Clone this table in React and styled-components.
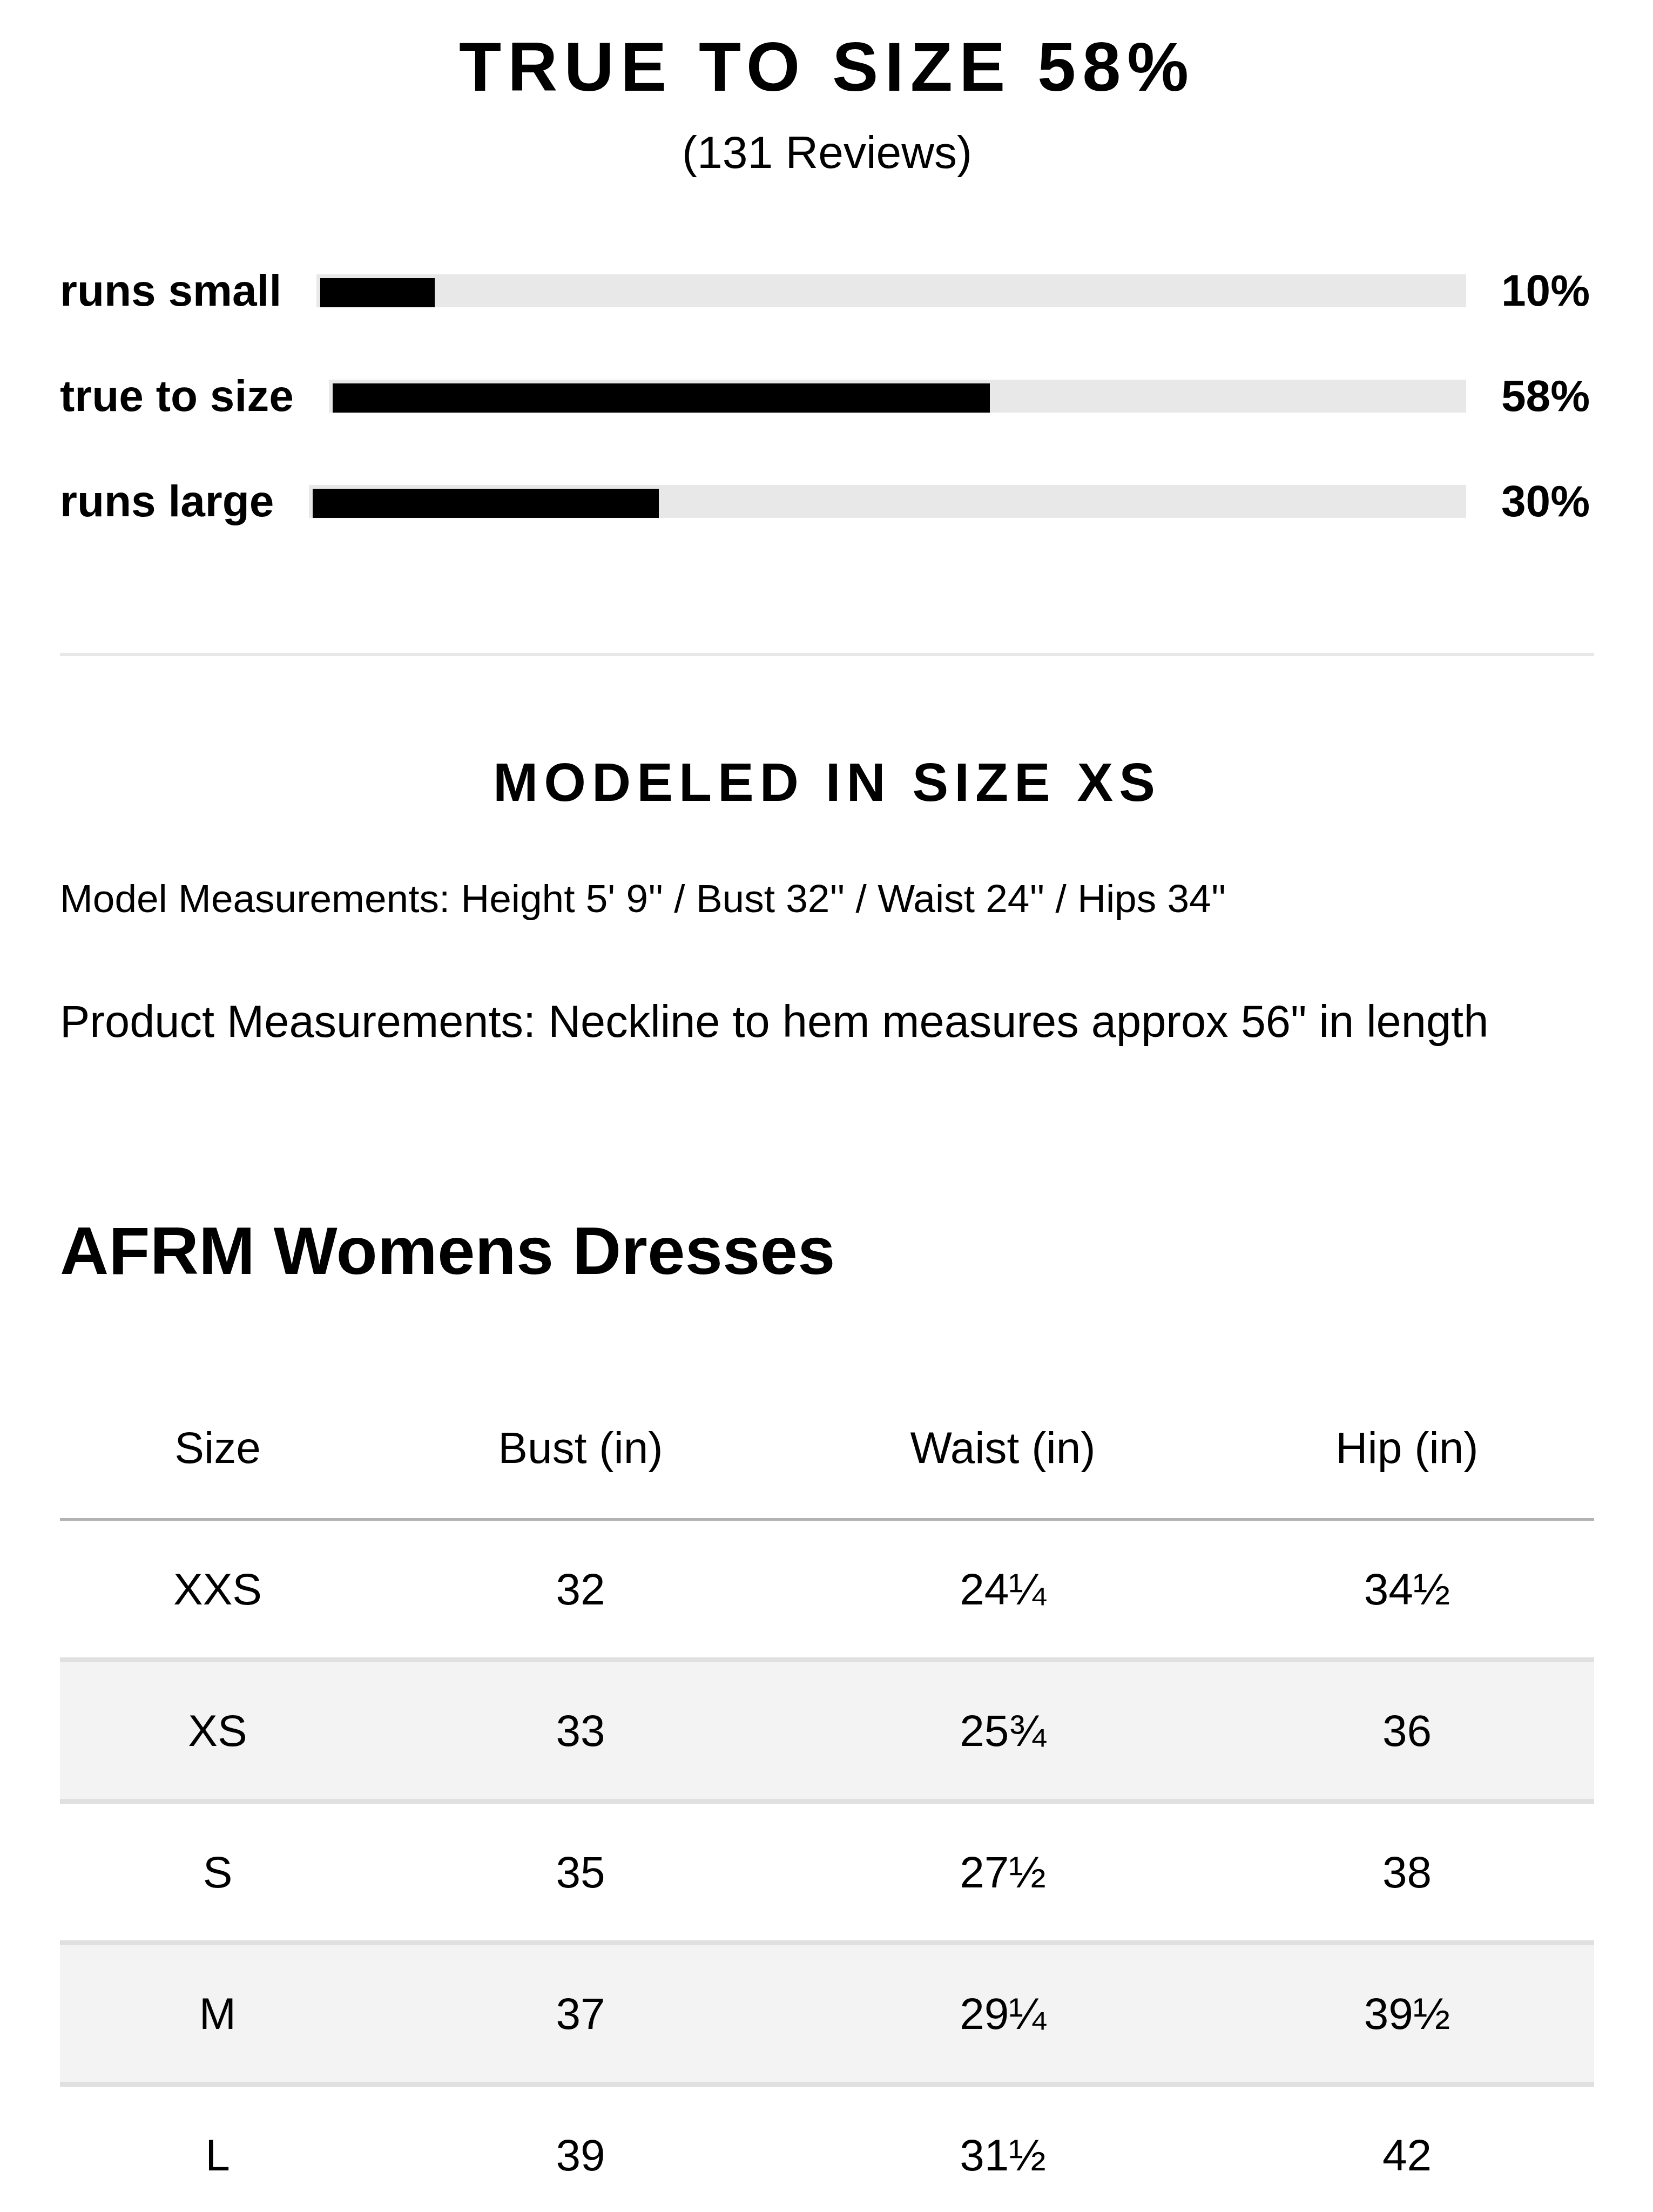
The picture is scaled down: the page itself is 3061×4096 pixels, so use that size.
import React from 'react';
import styled, { createGlobalStyle } from 'styled-components';

const GlobalStyle = createGlobalStyle`
body {
  margin: 0;
  background: #fff;
  color: #000;
  font-family: "Liberation Sans", Arial, Helvetica, sans-serif;
}
`;

const Page = styled.main`
padding: 0 109px 0 111px;
`;
const Title = styled.h1`
margin: 0;
padding-top: 60px;
font-size: 128px;
line-height: 1;
font-weight: 700;
letter-spacing: 12px;
text-align: center;
`;
const Reviews = styled.div`
margin-top: 52px;
font-size: 84px;
line-height: 1;
text-align: center;
`;
const Bars = styled.section`
display: flex;
flex-direction: column;
gap: 95px;
margin-top: 164px;
`;
const BarRow = styled.div`
display: flex;
align-items: center;
gap: 65px;
height: 100px;
font-size: 82px;
font-weight: 700;
line-height: 1;
`;
const Label = styled.span`
white-space: nowrap;
`;
const Track = styled.div`
flex: 1;
height: 61px;
box-sizing: border-box;
padding: 7px 0 0 7px;
background: #e8e8e8;
`;
const Fill = styled.div`
height: 100%;
background: #000;
`;
const Percent = styled.span`
width: 172px;
`;
const Divider = styled.hr`
margin: 231px 0 0;
border: 0;
height: 6px;
background: #e8e8e8;
`;
const Modeled = styled.h2`
margin: 183px 0 0;
font-size: 100px;
line-height: 1;
font-weight: 700;
letter-spacing: 11px;
text-align: center;
`;
const Note = styled.p`
margin: ${p => p.$top}px 0 0;
font-size: ${p => p.$size}px;
line-height: 1;
`;
const ChartTitle = styled.h3`
margin: 320px 0 0;
font-size: 125px;
line-height: 1;
font-weight: 700;
`;
const Table = styled.table`
width: 100%;
margin-top: 173px;
border-collapse: collapse;
table-layout: fixed;
font-size: 82px;
text-align: center;
`;
const HeadCell = styled.th`
height: 260px;
padding: 0;
font-weight: 400;
vertical-align: middle;
border-bottom: 5px solid #b2b2b2;
`;
const Row = styled.tr`
&:nth-child(even) {
  background: #f3f3f3;
}
`;
const Cell = styled.td`
height: 253px;
padding: 0;
vertical-align: middle;
border-bottom: 9px solid #e0e0e0;
`;

const fit = [
  { label: 'runs small', value: 10 },
  { label: 'true to size', value: 58 },
  { label: 'runs large', value: 30 },
];

const columns = [
  { title: 'Size', width: 584 },
  { title: 'Bust (in)', width: 760 },
  { title: 'Waist (in)', width: 804 },
  { title: 'Hip (in)', width: 693 },
];

const sizes = [
  ['XXS', '32', '24¼', '34½'],
  ['XS', '33', '25¾', '36'],
  ['S', '35', '27½', '38'],
  ['M', '37', '29¼', '39½'],
  ['L', '39', '31½', '42'],
];

const App = () => <>
  <GlobalStyle />
  <Page>
    <Title>TRUE TO SIZE 58%</Title>
    <Reviews>(131 Reviews)</Reviews>
    <Bars>
      {fit.map(item => (
        <BarRow key={item.label}>
          <Label>{item.label}</Label>
          <Track>
            <Fill style={{ width: `${item.value}%` }} />
          </Track>
          <Percent>{item.value}%</Percent>
        </BarRow>
      ))}
    </Bars>
    <Divider />
    <Modeled>MODELED IN SIZE XS</Modeled>
    <Note $top={129} $size={73}>Model Measurements: Height 5' 9'' / Bust 32'' / Waist 24'' / Hips 34''</Note>
    <Note $top={150} $size={83}>Product Measurements: Neckline to hem measures approx 56" in length</Note>
    <ChartTitle>AFRM Womens Dresses</ChartTitle>
    <Table>
      <colgroup>
        {columns.map(col => <col key={col.title} style={{ width: col.width }} />)}
      </colgroup>
      <thead>
        <tr>
          {columns.map(col => <HeadCell key={col.title}>{col.title}</HeadCell>)}
        </tr>
      </thead>
      <tbody>
        {sizes.map(row => (
          <Row key={row[0]}>
            {row.map((value, i) => <Cell key={i}>{value}</Cell>)}
          </Row>
        ))}
      </tbody>
    </Table>
  </Page>
</>;

export default App;
